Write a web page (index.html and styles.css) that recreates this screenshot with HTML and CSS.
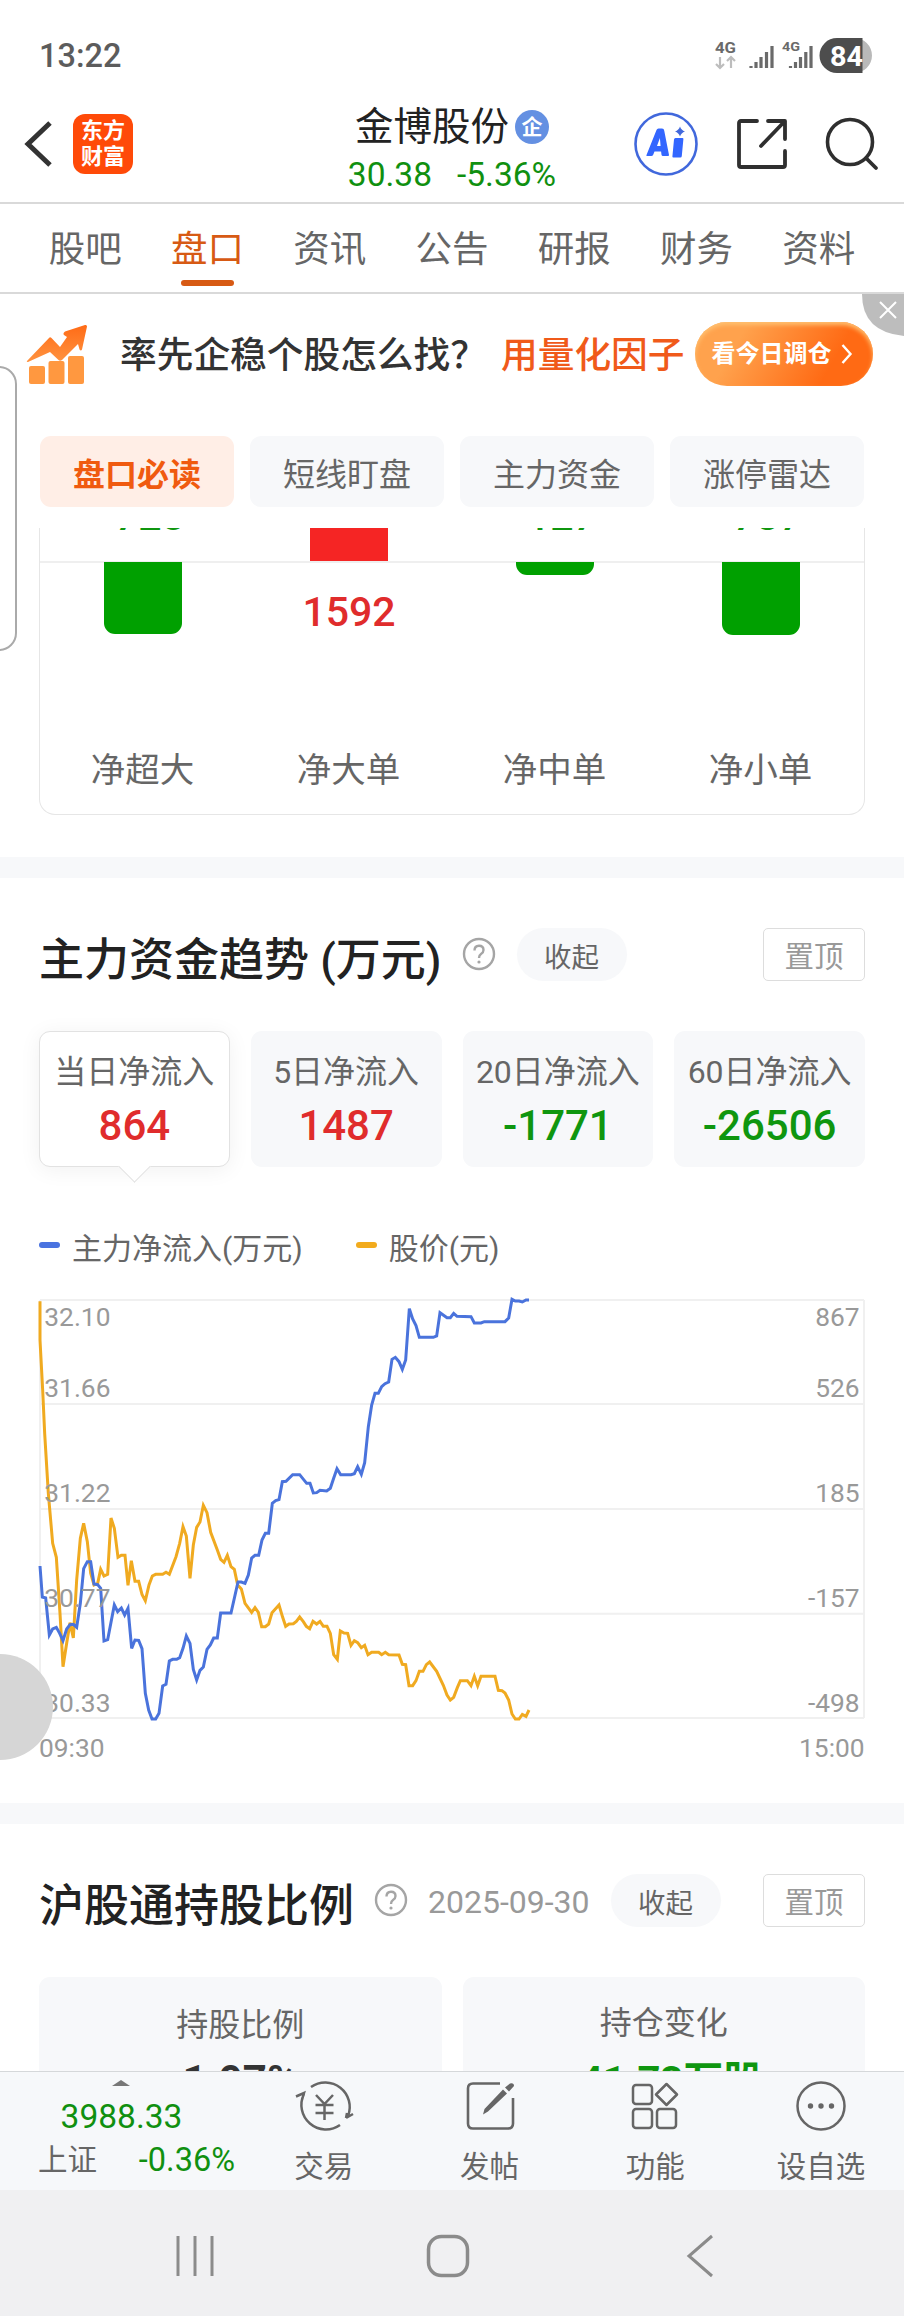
FILE: index.html
```html
<!DOCTYPE html>
<html lang="zh-CN">
<head>
  <meta charset="UTF-8" />
  <meta name="viewport" content="width=device-width, initial-scale=1.0"/>
  <title>金博股份</title>
  <link rel="stylesheet" href="styles.css">
</head>
<body>

  <div class="status-bar">
    <span class="clock">13:22</span>
    <svg class="status-icons" width="160" height="40" viewBox="0 0 160 40">
      <text class="net" x="3" y="17" font-size="15.5" textLength="21" lengthAdjust="spacingAndGlyphs">4G</text>
      <path d="M8 21v11M4 28l4 4 4-4M19 32V21M15 25l4-4 4 4" fill="none" stroke="#bdbdbd" stroke-width="2.2"/>
      <path d="M39 30v2M44 26v6M49 21v11M54.500 16v16M60 10v22" fill="none" stroke="#6a6a6a" stroke-width="3.200"/>
      <text class="net" x="70" y="15" font-size="13" textLength="18" lengthAdjust="spacingAndGlyphs">4G</text>
      <path d="M78.500 30v2M83.500 26v6M88.500 21v11M93.800 16v16M99 10v22" fill="none" stroke="#6a6a6a" stroke-width="3.200"/>
      <path d="M125 2h17v35h-17a17.500 17.500 0 0 1 0-35z" fill="#4d4d4d"/>
      <path d="M142 2a17.500 17.500 0 0 1 18 17.500 17.500 17.500 0 0 1-18 17.500z" fill="#b9b9b9"/>
      <path d="M140 2h10.500v35H140z" fill="#4d4d4d"/>
      <text x="118" y="29.500" font-size="27" font-weight="700" fill="#fff" textLength="33" lengthAdjust="spacingAndGlyphs">84</text>
    </svg>
  </div>

  <header class="stock-header">
    <svg class="back-icon" width="30" height="50" viewBox="0 0 30 50"><path d="M26 4L4 25l22 21" fill="none" stroke="#333" stroke-width="5"/></svg>
    <div class="logo"><span>东方</span><span>财富</span></div>
    <div class="stock-title">
      <h1>金博股份<span class="badge">企</span></h1>
      <p><span>30.38</span><span>-5.36%</span></p>
    </div>
    <div class="header-icons">
      <svg width="64" height="64" viewBox="0 0 64 64">
        <circle cx="32" cy="32" r="30.500" fill="none" stroke="#4168dc" stroke-width="2.600"/>
        <path d="M12.500 43L22.500 18q.5-1.500 2-1.500h3.500q2 0 2.200 2L35 43q.2 1-1 1h-5q-1.300 0-1.500-1.300l-.4-3.200h-6.600l-1.300 3.300q-.5 1.200-2 1.200h-4q-1.500 0-.7-1zM23 34h3.600l-.7-8z" fill="#3366ff" fill-rule="evenodd"/>
        <path d="M41.500 26h7q1 0 .9 1l-1.600 17q-.1 1.500-1.500 1.500h-7q-1 0-.9-1l1.600-17q.1-1.500 1.500-1.500z" fill="#3366ff"/>
        <path d="M46 14.500q1.200 3.700 5 5-3.800 1.300-5 5-1.200-3.700-5-5 3.800-1.300 5-5z" fill="#4168dc"/>
      </svg>
      <svg width="52" height="52" viewBox="0 0 52 52"><path d="M21 3H5Q3 3 3 5v42q0 2 2 2h42q2 0 2-2V33M32 3h17v18M48 4L25 28" fill="none" stroke="#2f2f2f" stroke-width="3.800" stroke-linecap="round" stroke-linejoin="round"/></svg>
      <svg width="54" height="54" viewBox="0 0 54 54"><circle cx="25" cy="25" r="22.500" fill="none" stroke="#2f2f2f" stroke-width="3.600"/><path d="M41 41l10 10" stroke="#2f2f2f" stroke-width="3.800" stroke-linecap="round"/></svg>
    </div>
  </header>

  <nav class="main-tabs">
    <a>股吧</a>
    <a class="active">盘口</a>
    <a>资讯</a>
    <a>公告</a>
    <a>研报</a>
    <a>财务</a>
    <a>资料</a>
  </nav>

  <section class="banner">
    <svg class="banner-icon" width="62" height="62" viewBox="0 0 62 62">
      <defs>
        <linearGradient id="rise" x1="0" y1="0" x2="0" y2="1"><stop offset="0" stop-color="#ff6b16"/><stop offset="1" stop-color="#ff9340"/></linearGradient>
      </defs>
      <path d="M1 37L23 14q1-1.500 2.500 0L34 23l7-10-3-2q-1.500-1.500 1-3.500L59 1q2-.5 2 1.500l-5 23q-1 2-2.500 0L52 20 36 36q-2 1.500-3.500 0L24 28 2 38q-2 0-1-1z" fill="url(#rise)"/>
      <g fill="#ff9840"><rect x="3" y="42" width="16" height="18" rx="2"/><rect x="22.500" y="37" width="16" height="23" rx="2"/><rect x="42" y="32" width="16" height="28" rx="2"/></g>
    </svg>
    <p class="banner-text">率先企稳个股怎么找？</p>
    <p class="banner-hot">用量化因子</p>
    <a class="banner-btn">看今日调仓<svg width="12" height="22" viewBox="0 0 12 22"><path d="M1.500 2l8 9-8 9" fill="none" stroke="#fff" stroke-width="2.400"/></svg></a>
    <svg class="banner-close" width="42" height="42" viewBox="0 0 42 42"><path d="M0 0h42v42Q0 38 0 0z" fill="#bdbdbd"/><path d="M18 8l16 16M34 8L18 24" stroke="#fff" stroke-width="2"/></svg>
  </section>

  <div class="filter-tabs">
    <a class="active">盘口必读</a>
    <a>短线盯盘</a>
    <a>主力资金</a>
    <a>涨停雷达</a>
  </div>

  <section class="order-card">
    <div class="order-col">
      <div class="order-up"><span class="order-num down">-728</span></div>
      <div class="order-down"><i class="bar" style="height:72px"></i></div>
      <span class="order-label">净超大</span>
    </div>
    <div class="order-col">
      <div class="order-up"><i class="bar bar-up"></i></div>
      <div class="order-down"><span class="order-num up">1592</span></div>
      <span class="order-label">净大单</span>
    </div>
    <div class="order-col">
      <div class="order-up"><span class="order-num down">-127</span></div>
      <div class="order-down"><i class="bar" style="height:13px"></i></div>
      <span class="order-label">净中单</span>
    </div>
    <div class="order-col">
      <div class="order-up"><span class="order-num down">-737</span></div>
      <div class="order-down"><i class="bar" style="height:73px"></i></div>
      <span class="order-label">净小单</span>
    </div>
  </section>

  <div class="divider"></div>

  <section class="trend">
    <div class="section-head">
      <h2>主力资金趋势 (万元)</h2>
      <svg class="help" width="34" height="34" viewBox="0 0 34 34"><circle cx="17" cy="17" r="15" fill="none" stroke="#a5a5a5" stroke-width="2.400"/><path d="M12.500 13.500q0-4.800 4.500-4.800t4.500 4.300q0 2.500-2.500 4-2 1.300-2 4" fill="none" stroke="#a5a5a5" stroke-width="2.400"/><circle cx="17" cy="25" r="1.600" fill="#a5a5a5"/></svg>
      <a class="pill">收起</a>
      <a class="pin">置顶</a>
    </div>

    <div class="flow-cards">
      <div class="flow-card active"><span>当日净流入</span><b class="up">864</b></div>
      <div class="flow-card"><span>5日净流入</span><b class="up">1487</b></div>
      <div class="flow-card"><span>20日净流入</span><b class="down">-1771</b></div>
      <div class="flow-card"><span>60日净流入</span><b class="down">-26506</b></div>
    </div>

    <div class="legend">
      <span><i class="dash blue"></i>主力净流入(万元)</span>
      <span><i class="dash gold"></i>股价(元)</span>
    </div>

    <svg class="trend-chart" width="904" height="500" viewBox="-60 0 2712 1500">
      <path d="M60 60H2532M60 372H2532M60 687H2532M60 1001H2532M60 1314H2532M60 60V1314M2532 60V1314" fill="none" stroke="#f0f0f0" stroke-width="6"/>
      <polyline class="line-price" points="60,64 60,180 68,330 74,460 85,640 98,790 109,832 120,1000 129,1160 140,1090 150,1028 160,1074 170,900 181,775 191,730 202,785 212,880 222,915 233,910 242,868 252,888 263,883 273,714 283,745 294,832 304,826 315,826 324,916 334,842 345,904 356,904 366,943 376,962 387,915 397,888 407,883 428,883 438,877 448,883 468,830 479,790 489,740 499,768 510,895 520,795 530,742 540,726 550,676 561,698 572,757 592,810 602,838 612,847 622,826 633,860 643,868 653,915 664,927 675,970 695,997 705,983 715,997 725,1040 736,1040 746,1032 756,998 777,975 788,1012 797,1039 807,1032 820,1031 829,1024 839,1011 850,1025 859,1039 869,1046 879,1024 890,1032 900,1024 910,1039 921,1039 931,1060 941,1124 952,1138 961,1053 972,1059 983,1060 993,1096 1003,1082 1013,1088 1024,1103 1034,1096 1044,1124 1055,1117 1076,1117 1085,1124 1096,1117 1106,1124 1137,1125 1147,1153 1157,1154 1167,1217 1178,1217 1188,1202 1198,1174 1209,1174 1219,1154 1229,1146 1250,1174 1270,1216 1281,1245 1291,1260 1301,1252 1312,1223 1321,1202 1342,1202 1353,1217 1363,1189 1373,1217 1383,1189 1425,1189 1435,1231 1446,1232 1455,1239 1466,1260 1476,1302 1486,1317 1497,1317 1507,1303 1518,1309 1527,1290"/>
      <polyline class="line-flow" points="60,858 67,951 77,954 88,1065 98,1047 109,1042 119,1060 129,1082 140,1047 150,1034 160,1033 170,1042 181,970 191,866 202,845 212,845 222,912 233,914 242,925 252,1083 263,1079 283,975 293,995 304,984 314,1005 324,985 335,1105 345,1080 356,1081 366,1106 376,1240 386,1290 396,1317 407,1317 417,1300 428,1218 438,1213 448,1143 458,1138 470,1138 479,1133 489,1105 499,1068 510,1090 520,1168 530,1200 540,1171 550,1161 561,1108 571,1095 581,1074 592,1074 602,999 633,999 654,906 664,906 675,910 685,885 695,834 705,826 716,826 726,780 736,760 746,760 757,670 767,662 777,659 787,605 798,604 818,584 839,584 860,610 870,610 880,639 890,638 900,631 920,633 931,625 941,595 951,566 962,584 993,584 1003,581 1013,560 1024,583 1034,548 1045,440 1055,375 1065,340 1075,340 1085,320 1095,311 1106,306 1116,238 1126,232 1137,245 1147,268 1157,240 1168,86 1178,117 1188,137 1198,172 1240,172 1250,168 1260,98 1281,113 1291,113 1301,100 1311,109 1353,110 1363,129 1383,129 1393,125 1455,125 1466,114 1476,58 1486,63 1497,63 1507,66 1518,60 1527,60"/>
      <g class="axis">
        <text x="73" y="138">32.10</text>
        <text x="73" y="351">31.66</text>
        <text x="73" y="666">31.22</text>
        <text x="73" y="981">30.77</text>
        <text x="73" y="1296">30.33</text>
        <text x="57" y="1431">09:30</text>
      </g>
      <g class="axis axis-right">
        <text x="2519" y="138">867</text>
        <text x="2519" y="351">526</text>
        <text x="2519" y="666">185</text>
        <text x="2519" y="981">-157</text>
        <text x="2519" y="1296">-498</text>
        <text x="2534" y="1431">15:00</text>
      </g>
    </svg>
  </section>

  <div class="divider"></div>

  <section class="holding">
    <div class="section-head">
      <h2>沪股通持股比例</h2>
      <svg class="help" width="34" height="34" viewBox="0 0 34 34"><circle cx="17" cy="17" r="15" fill="none" stroke="#a5a5a5" stroke-width="2.400"/><path d="M12.500 13.500q0-4.800 4.500-4.800t4.500 4.300q0 2.500-2.500 4-2 1.300-2 4" fill="none" stroke="#a5a5a5" stroke-width="2.400"/><circle cx="17" cy="25" r="1.600" fill="#a5a5a5"/></svg>
      <span class="date">2025-09-30</span>
      <a class="pill">收起</a>
      <a class="pin">置顶</a>
    </div>
    <div class="hold-cards">
      <div class="hold-card"><span>持股比例</span><b>1.97%</b></div>
      <div class="hold-card change"><span>持仓变化</span><b class="down">-41.73万股</b></div>
    </div>
  </section>

  <footer class="bottom-bar">
    <div class="index">
      <i class="caret"></i>
      <b>3988.33</b>
      <p><span>上证</span><em>-0.36%</em></p>
    </div>
    <a class="tool">
      <svg width="60" height="52" viewBox="0 0 60 52" fill="none" stroke="#666" stroke-width="2.500">
        <path d="M17 7A24.500 24.500 0 0 1 54 36M52 38l1-5M52 38l7-4M46 45A24.500 24.500 0 0 1 10 14M2 16.500l8-3.500-2 7"/>
        <path d="M22 15l8.500 9L39 15M30.500 24v16M21.500 25h18M21.500 33h18"/>
      </svg>
      <span>交易</span>
    </a>
    <a class="tool">
      <svg width="50" height="52" viewBox="0 0 50 52">
        <path d="M35 3.500H8q-5 0-5 5v35q0 5 5 5h35q5 0 5-5V18" fill="none" stroke="#666" stroke-width="2.600"/>
        <path d="M38 9.500l4 4-19 18-5 3 1.500-5.500zM40 7.500l5-4q4-1 4 2.500l-5 5.500z" fill="#666"/>
      </svg>
      <span>发帖</span>
    </a>
    <a class="tool">
      <svg width="50" height="52" viewBox="0 0 50 52" fill="none" stroke="#666" stroke-width="2.500">
        <rect x="3" y="5" width="19" height="19" rx="3"/><rect x="3" y="29" width="19" height="19" rx="3"/><rect x="27" y="29" width="19" height="19" rx="3"/>
        <path d="M36.500 4L47 14.500 36.500 25 26 14.500z" stroke-linejoin="round"/>
      </svg>
      <span>功能</span>
    </a>
    <a class="tool">
      <svg width="52" height="52" viewBox="0 0 52 52"><circle cx="26" cy="26" r="23.500" fill="none" stroke="#666" stroke-width="2.500"/><g fill="#666"><circle cx="15.500" cy="26" r="2.700"/><circle cx="26" cy="26" r="2.700"/><circle cx="36.500" cy="26" r="2.700"/></g></svg>
      <span>设自选</span>
    </a>
  </footer>

  <div class="system-nav">
    <svg width="42" height="44" viewBox="0 0 42 44"><path d="M4 2v40M21 2v40M38 2v40" stroke="#8b8b8b" stroke-width="3"/></svg>
    <svg class="home" width="44" height="44" viewBox="0 0 44 44"><rect x="2.500" y="2.500" width="39" height="39" rx="13" fill="none" stroke="#8b8b8b" stroke-width="3.500"/></svg>
    <svg width="30" height="44" viewBox="0 0 30 44"><path d="M27 2L4 22l23 20" fill="none" stroke="#8b8b8b" stroke-width="3"/></svg>
  </div>

  <div class="edge-panel"></div>
  <div class="edge-ball"></div>

</body>
</html>
```
FILE: styles.css
```css
* {
  box-sizing: border-box;
  margin: 0;
  padding: 0;
}

body {
  position: relative;
  width: 904px;
  height: 2316px;
  overflow: hidden;
  display: flex;
  flex-direction: column;
  background: #fff;
  color: #666;
  font-family: Roboto, "Noto Sans CJK SC", sans-serif;
}

svg {
  display: block;
  flex-shrink: 0;
}

i, em {
  font-style: normal;
}

.up {
  color: #e02c2c;
}

.down {
  color: #0f960f;
}

/* status bar */
.status-bar {
  height: 96px;
  padding: 36px 32px 0 39px;
  display: flex;
  justify-content: space-between;
}

.clock {
  font-size: 32.5px;
  font-weight: 500;
  line-height: 40px;
  color: #5c5c5c;
}

.status-icons .net {
  font-weight: 700;
  fill: #6a6a6a;
}

/* header */
.stock-header {
  height: 108px;
  flex-shrink: 0;
  display: grid;
  grid-template-columns: 73px 60px 1fr 245px;
  align-items: center;
  border-bottom: 2px solid #d9d9d9;
}

.back-icon {
  margin: -11px 0 0 24px;
}

.logo {
  width: 60px;
  height: 60px;
  margin-top: -11px;
  border-radius: 12px;
  background: #ff4a08;
  color: #fff;
  font-size: 22px;
  font-weight: 700;
  line-height: 26px;
  padding-top: 4px;
  display: flex;
  flex-direction: column;
  align-items: center;
}

.stock-title {
  width: 240px;
  margin-left: 199px;
  padding-top: 2px;
}

.stock-title h1 {
  display: flex;
  align-items: center;
  justify-content: center;
  gap: 6px;
  font-size: 38.5px;
  font-weight: 400;
  line-height: 50px;
  color: #222;
}

.badge {
  width: 34px;
  height: 34px;
  border-radius: 50%;
  background: #6490e2;
  color: #fff;
  font-size: 21px;
  font-weight: 700;
  line-height: 34px;
  text-align: center;
}

.stock-title p {
  display: flex;
  justify-content: center;
  gap: 25px;
  font-size: 33.5px;
  line-height: 46px;
  color: #109010;
}

.header-icons {
  display: flex;
  align-items: center;
  justify-content: space-between;
  padding-right: 25px;
  margin-left: -25px;
  margin-top: -11px;
}

/* tabs */
.main-tabs {
  height: 90px;
  flex-shrink: 0;
  padding: 0 24px;
  display: flex;
  border-bottom: 2px solid #d9d9d9;
}

.main-tabs a {
  flex: 1;
  display: flex;
  flex-direction: column;
  align-items: center;
  font-size: 36.5px;
  line-height: 76px;
  padding-top: 8px;
}

.main-tabs .active {
  color: #d75a14;
}

.main-tabs .active::after {
  content: "";
  width: 53px;
  height: 6px;
  margin-top: -8px;
  border-radius: 3px;
  background: #d75a14;
}

/* banner */
.banner {
  position: relative;
  height: 142px;
  flex-shrink: 0;
  padding: 28px 0 0 26px;
  display: flex;
  align-items: flex-start;
}

.banner-icon {
  margin-top: 2px;
}

.banner p {
  font-size: 36.7px;
  font-weight: 500;
  line-height: 67px;
  white-space: nowrap;
}

.banner-text {
  width: 381px;
  margin-left: 32px;
  color: #333;
}

.banner-hot {
  color: #f05a1a;
  width: 194px;
}

.banner-btn {
  width: 178px;
  height: 64px;
  padding-right: 4px;
  display: flex;
  align-items: center;
  justify-content: center;
  gap: 9px;
  border-radius: 32px;
  background: linear-gradient(120deg, #ffa24d 25%, #ff6a14 75%);
  box-shadow: inset 0 3px 4px #ffc070;
  color: #fff;
  font-size: 24px;
  font-weight: 700;
  line-height: 60px;
}

.banner-close {
  position: absolute;
  top: 0;
  right: 0;
}

/* filter tabs */
.filter-tabs {
  height: 92px;
  flex-shrink: 0;
  padding: 0 40px;
  display: grid;
  grid-template-columns: repeat(4, 1fr);
  gap: 16px;
}

.filter-tabs a {
  height: 71px;
  border-radius: 11px;
  background: #f7f8fa;
  font-size: 32px;
  line-height: 78px;
  text-align: center;
}

.filter-tabs .active {
  background: #ffeee6;
  color: #f05a0f;
  font-weight: 700;
}

/* net order bars, the upper half is scrolled under the tabs */
.order-card {
  height: 287px;
  flex-shrink: 0;
  margin: 0 39px;
  display: grid;
  grid-template-columns: repeat(4, 1fr);
  border: 1px solid #e6e6e6;
  border-top: 0;
  border-radius: 0 0 16px 16px;
  overflow: hidden;
}

.order-col {
  display: flex;
  flex-direction: column;
  align-items: center;
}

.order-up {
  height: 33px;
  display: flex;
  align-items: flex-end;
}

.order-num {
  font-size: 41px;
  font-weight: 500;
  line-height: 48px;
}

.order-up .order-num {
  margin-bottom: 21px;
}

.order-down {
  width: 100%;
  height: 174px;
  border-top: 2px solid #efefef;
  display: flex;
  flex-direction: column;
  align-items: center;
}

.order-down .order-num {
  margin-top: 25px;
}

.bar {
  width: 78px;
  margin-top: -1px;
  border-radius: 0 0 11px 11px;
  background: #00a000;
}

.bar-up {
  height: 34px;
  border-radius: 0;
  background: #f52524;
}

.order-label {
  font-size: 34.5px;
  line-height: 71px;
  margin-left: -1px;
}

.divider {
  height: 21px;
  flex-shrink: 0;
  background: #f7f8fa;
}

/* main fund trend */
.order-card + .divider {
  margin-top: 42px;
}

.trend {
  height: 925px;
  flex-shrink: 0;
  padding-top: 50px;
}

.section-head {
  height: 53px;
  padding: 0 39px;
  display: flex;
  align-items: center;
}

.section-head h2 {
  font-size: 45px;
  font-weight: 500;
  line-height: 53px;
  padding-top: 11px;
  color: #222;
  white-space: nowrap;
}

.help {
  margin: -1px 0 0 20px;
}

.pill {
  width: 110px;
  height: 53px;
  margin-left: 21px;
  border-radius: 27px;
  background: #f7f8fa;
  font-size: 27.5px;
  line-height: 59px;
  text-align: center;
}

.pin {
  width: 102px;
  height: 53px;
  margin-left: auto;
  border: 1px solid #ddd;
  border-radius: 5px;
  color: #999;
  font-size: 29.5px;
  line-height: 57px;
  text-align: center;
}

.flow-cards {
  padding: 50px 39px 0;
  display: grid;
  grid-template-columns: repeat(4, 1fr);
  gap: 21px;
}

.flow-card {
  position: relative;
  height: 136px;
  padding-top: 16px;
  border-radius: 11px;
  background: #f7f8fa;
  display: flex;
  flex-direction: column;
  align-items: center;
}

.flow-card span {
  font-size: 32px;
  line-height: 50px;
  white-space: nowrap;
}

.flow-card b {
  font-size: 42px;
  font-weight: 500;
  line-height: 54px;
  margin-top: 2px;
}

.flow-card.active {
  background: #fff;
  border: 1px solid #e2e2e2;
  box-shadow: 0 3px 22px rgba(0,0,0,0.06);
  padding-top: 15px;
}

.flow-card.active::after {
  content: "";
  position: absolute;
  left: 83px;
  bottom: -12px;
  width: 22px;
  height: 22px;
  background: #fff;
  border: solid #e2e2e2;
  border-width: 0 1px 1px 0;
  transform: rotate(45deg);
}

.legend {
  height: 114px;
  padding: 49px 39px 0;
  display: flex;
  gap: 53px;
}

.legend span {
  display: flex;
  align-items: center;
  height: 60px;
  font-size: 30px;
  color: #666;
}

.dash {
  width: 21px;
  height: 6px;
  margin: -2px 12px 0 0;
  border-radius: 3px;
}

.blue {
  background: #4a73e0;
}

.gold {
  background: #f2ab1d;
}

.trend-chart {
  margin-top: -1px;
}

.trend-chart polyline {
  fill: none;
  stroke-width: 9;
}

.line-price {
  stroke: #f0aa20;
}

.line-flow {
  stroke: #4a73dc;
}

.axis text {
  font-size: 79px;
  fill: #999;
}

.axis-right {
  text-anchor: end;
}

/* holding ratio */
.holding {
  height: 247px;
  flex-shrink: 0;
  padding-top: 50px;
  overflow: hidden;
}

.date {
  margin-left: 20px;
  padding-top: 2px;
  font-size: 32px;
  color: #999;
}

.hold-cards {
  padding: 50px 39px 0;
  display: grid;
  grid-template-columns: 1fr 1fr;
  gap: 21px;
}

.hold-card {
  height: 180px;
  padding-top: 21px;
  border-radius: 11px;
  background: #f7f8fa;
  display: flex;
  flex-direction: column;
  align-items: center;
}

.hold-card.change {
  padding-top: 19px;
}

.hold-card span {
  font-size: 32px;
  line-height: 54px;
}

.hold-card b {
  font-size: 40px;
  font-weight: 700;
  line-height: 50px;
  padding-top: 7px;
}

.hold-card:first-child b {
  font-size: 42px;
  padding-top: 4px;
  color: #333;
}

/* bottom bar */
.bottom-bar {
  height: 119px;
  flex-shrink: 0;
  display: grid;
  grid-template-columns: 241px repeat(4, 165.7px);
  border-top: 1px solid #d5d8da;
  background: #f6f8fa;
}

.index {
  display: flex;
  flex-direction: column;
  align-items: center;
  padding-top: 8px;
}

.caret {
  border: 9px solid transparent;
  border-top: 0;
  border-bottom: 6px solid #777;
}

.index b {
  font-size: 33.5px;
  font-weight: 400;
  line-height: 40px;
  margin: 11px 0 0 2px;
  color: #109010;
}

.index p {
  width: 100%;
  padding: 0 6px 0 38px;
  display: flex;
  justify-content: space-between;
  font-size: 29.5px;
  line-height: 46px;
}

.index em {
  font-size: 32.5px;
  color: #109010;
}

.tool {
  display: flex;
  flex-direction: column;
  align-items: center;
  padding-top: 8px;
}

.tool span {
  font-size: 29.5px;
  line-height: 40px;
  margin-top: 15px;
}

.system-nav {
  height: 126px;
  flex-shrink: 0;
  padding: 6px 189px 0 174px;
  display: flex;
  align-items: center;
  justify-content: space-between;
  background: #f0f0f2;
}

.home {
  margin-right: 6px;
}

/* edge handles floating above the page */
.edge-panel {
  position: absolute;
  left: -20px;
  top: 366px;
  width: 37px;
  height: 285px;
  border: 2px solid #aaa;
  border-radius: 18px;
  background: #fff;
}

.edge-ball {
  position: absolute;
  left: -53px;
  top: 1654px;
  width: 106px;
  height: 106px;
  border-radius: 50%;
  background: #d6d6d6;
}
```
